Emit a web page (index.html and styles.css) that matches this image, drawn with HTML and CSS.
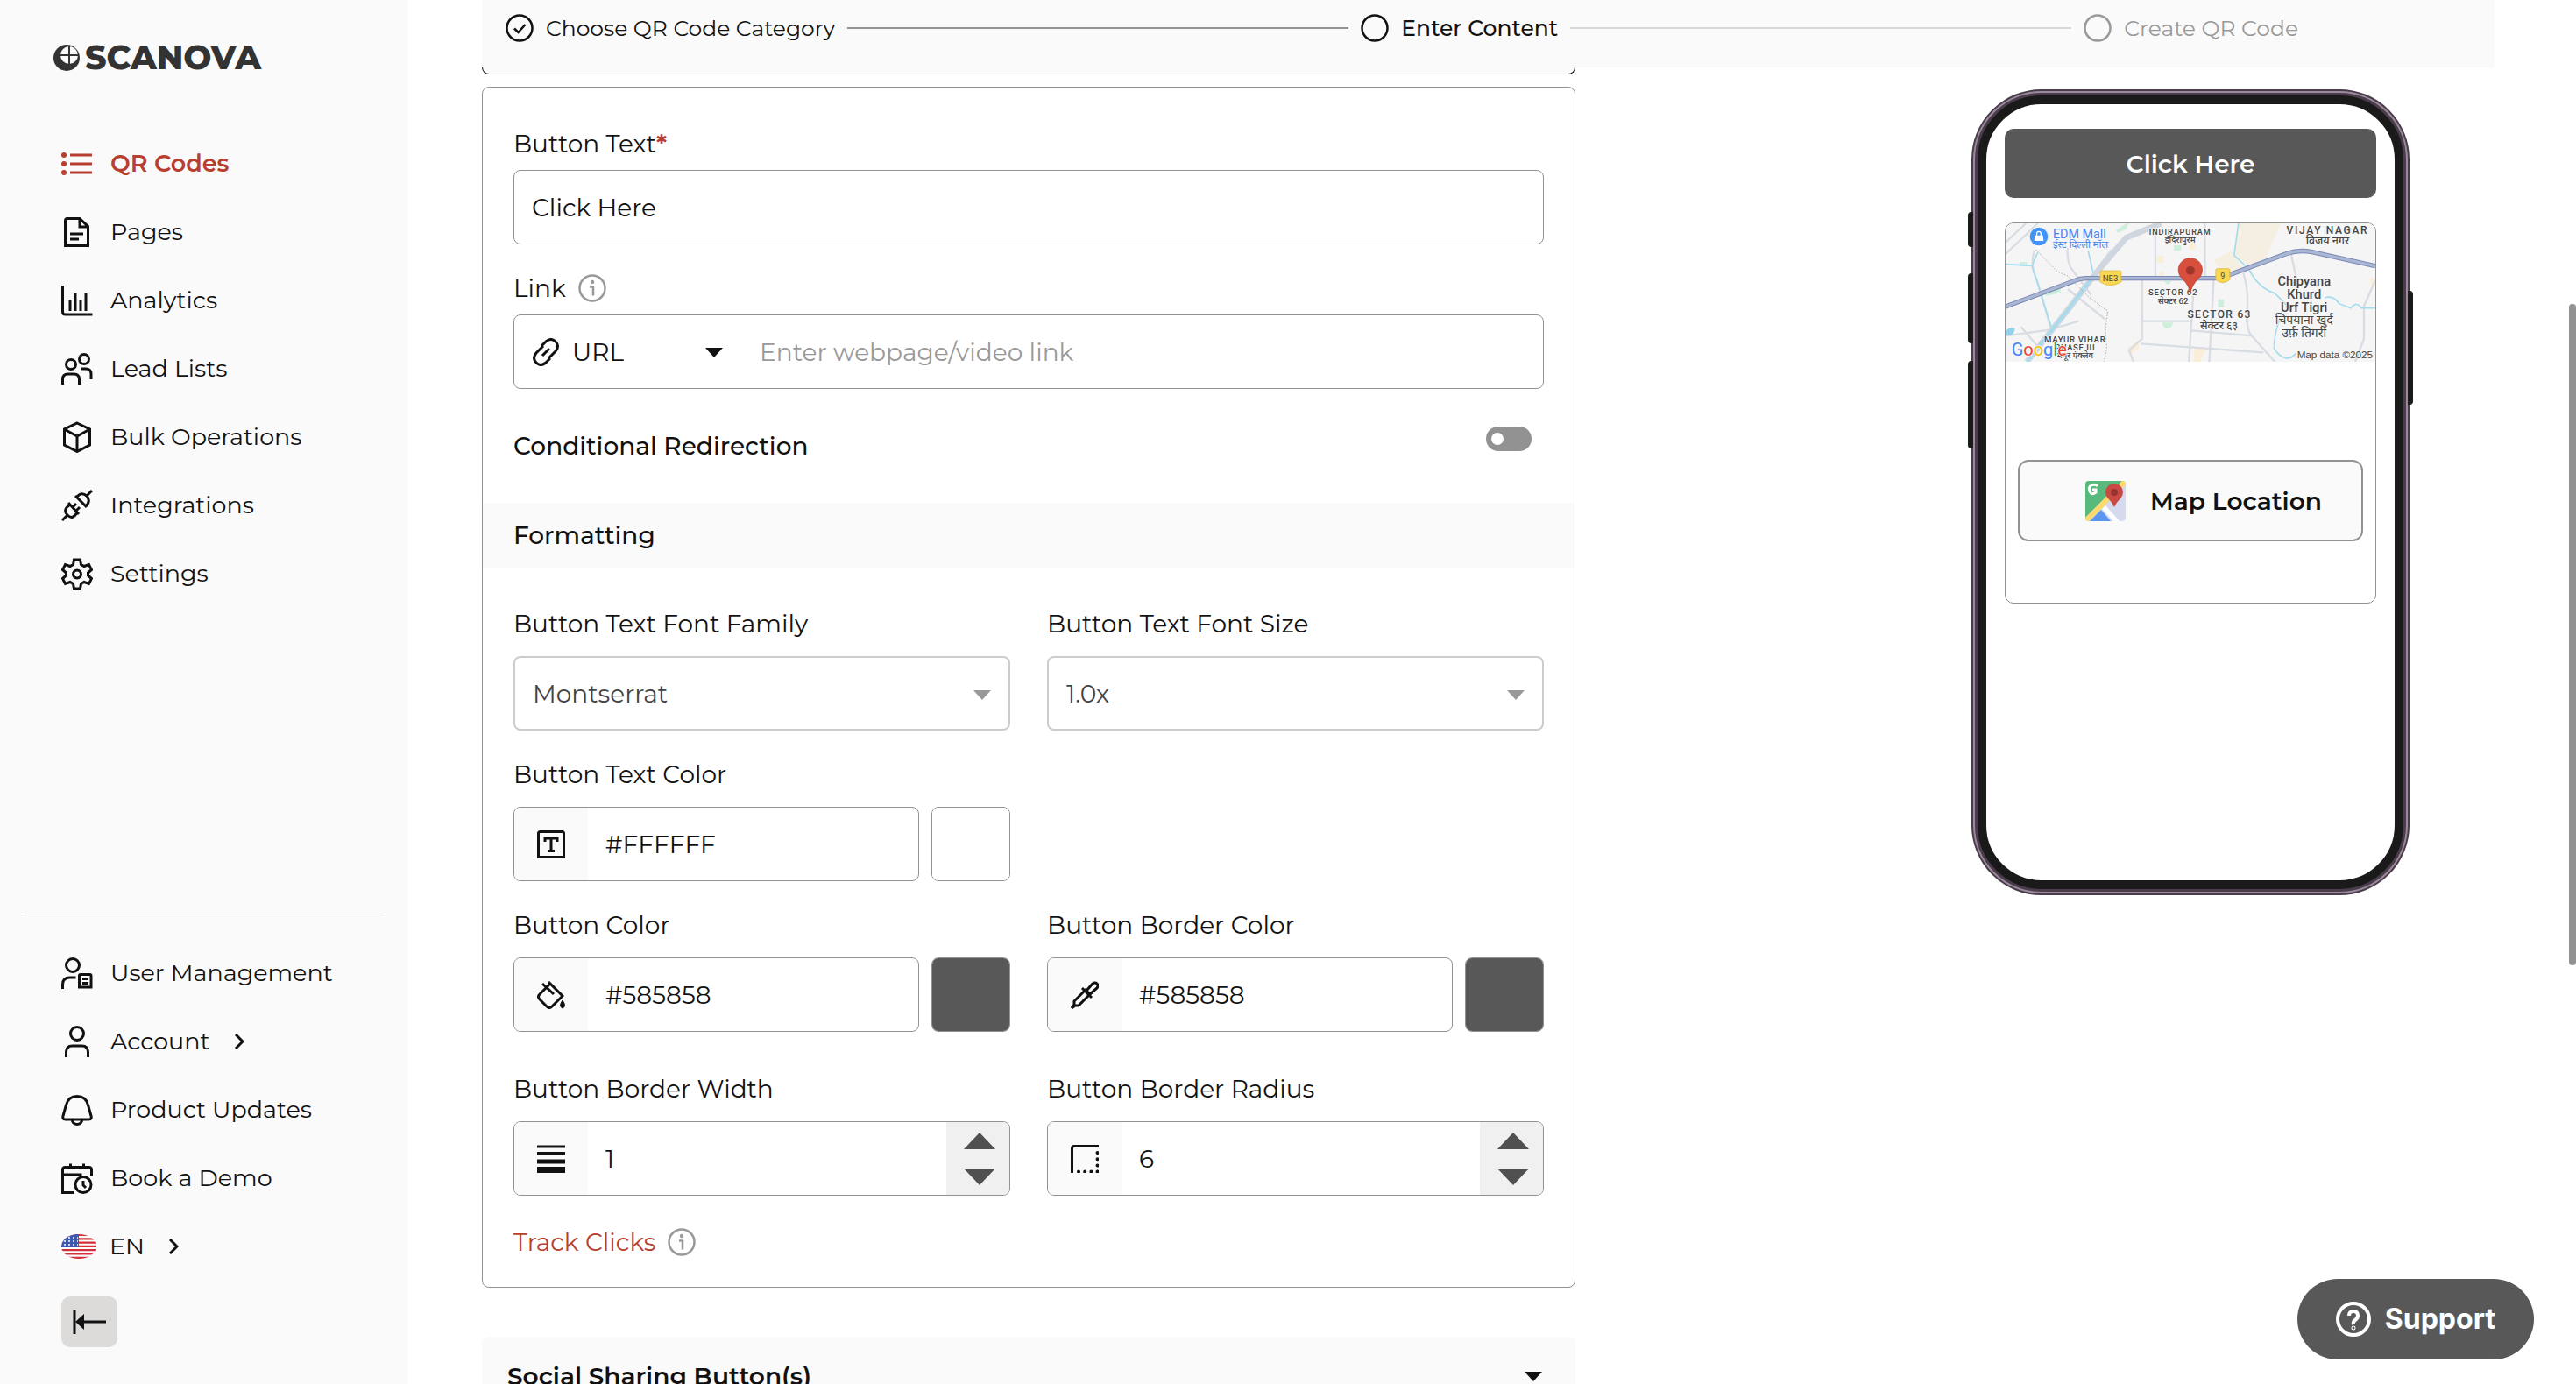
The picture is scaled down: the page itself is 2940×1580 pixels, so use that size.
FILE: index.html
```html
<!DOCTYPE html>
<html lang="en">
<head>
    <meta charset="UTF-8">
    <meta name="viewport" content="width=device-width, initial-scale=1.0">
    <title>Scanova - Enter Content</title>
    <link rel="stylesheet" href="styles.css">
</head>
<body>

<div class="app">
    <aside class="sidebar">
        <a href="#" class="logo">
            <svg width="30" height="32" viewBox="0 0 30 32">
                <circle cx="15" cy="16" r="15" fill="#333"/>
                <circle cx="18" cy="13" r="10" fill="#fafafa"/>
                <path d="M18 3v20M8 13h20" stroke="#333" stroke-width="2"/>
            </svg>
            <span>SCANOVA</span>
        </a>

        <nav class="nav">
            <a href="#" class="nav-item active">
                <svg class="icon" viewBox="0 0 36 36"><g fill="currentColor" stroke="none"><circle cx="3" cy="8" r="3"/><circle cx="3" cy="18" r="3"/><circle cx="3" cy="28" r="3"/></g><path d="M10 8h25M10 18h25M10 28h25"/></svg>
                <span>QR Codes</span>
            </a>
            <a href="#" class="nav-item">
                <svg class="icon" viewBox="0 0 36 36"><path d="M7 2.500h14l9.500 9v22h-26v-28.500q0-2.500 2.500-2.500zM21 2.500v9.500h9.500M10 20h15M10 26h10"/></svg>
                <span>Pages</span>
            </a>
            <a href="#" class="nav-item">
                <svg class="icon" viewBox="0 0 36 36"><path d="M1.500 1v30q0 3 3 3h31M10 17v13M16 10v20M22 17v13M28 10v20"/></svg>
                <span>Analytics</span>
            </a>
            <a href="#" class="nav-item">
                <svg class="icon" viewBox="0 0 36 36"><circle cx="11" cy="13" r="5.500"/><circle cx="26" cy="7" r="5.500"/><path d="M1.500 36v-6q0-6 6-6h7q6 0 6 6v6M23 18h5q6 0 6 6v6"/></svg>
                <span>Lead Lists</span>
            </a>
            <a href="#" class="nav-item">
                <svg class="icon" viewBox="0 0 36 36"><path d="M18 2l14.500 7v18l-14.500 7.500l-14.500-7.500v-18zM3.500 9l14.500 8l14.500-8M18 17v17"/></svg>
                <span>Bulk Operations</span>
            </a>
            <a href="#" class="nav-item">
                <svg class="icon" viewBox="0 0 36 36"><path d="M1 35l6-6M29 7l6-6M8 15l12 13M7 29q-6-6 3-12M7 29q6 6 11-3M13 20l4-4M17 24l4-4M16 7l13 13M18 8q5-6 11-1M29 7q5 6-1 12"/></svg>
                <span>Integrations</span>
            </a>
            <a href="#" class="nav-item">
                <svg class="icon" viewBox="0 0 36 36"><path d="M14.500 2h7l1 5.500l3.500 2l5.500-2l3 6l-4 3.500v3l4 3.500l-3 6l-5.500-2l-3.500 2l-1 5.500h-7l-1-5.500l-3.500-2l-5.500 2l-3-6l4-3.500v-3l-4-3.500l3-6l5.500 2l3.500-2z"/><circle cx="18" cy="18.500" r="4.500"/></svg>
                <span>Settings</span>
            </a>
        </nav>

        <nav class="nav nav-bottom">
            <a href="#" class="nav-item">
                <svg class="icon" viewBox="0 0 36 36"><circle cx="13" cy="9" r="7.500"/><path d="M1.500 36v-5q0-8 8-8h7M20.500 34v-13q0-1.500 1.500-1.500h10.500q1.500 0 1.500 1.500v13zM24 24.500h7M24 29.500h7"/></svg>
                <span>User Management</span>
            </a>
            <a href="#" class="nav-item">
                <svg class="icon" viewBox="0 0 36 36"><circle cx="18" cy="9" r="7.500"/><path d="M5.500 36v-6q0-7 7-7h11q7 0 7 7v6"/></svg>
                <span>Account</span>
                <svg class="chevron" viewBox="0 0 12 18"><path d="M2 1l8 8l-8 8"/></svg>
            </a>
            <a href="#" class="nav-item">
                <svg class="icon" viewBox="0 0 36 36"><path d="M18 2.500q-10 0-12.500 10l-3.500 12.500q-1 4 2.500 4h27q3.500 0 2.500-4l-3.500-12.500q-2.500-10-12.500-10zM12 29q1 5.500 6 5.500t6-5.500"/></svg>
                <span>Product Updates</span>
            </a>
            <a href="#" class="nav-item">
                <svg class="icon" viewBox="0 0 36 36"><path d="M15 34.500h-13.500v-26q0-3 3-3h27q3 0 3 3v7M1.500 14h22M10.500 1.500v4M25.500 1.500v4M25 21v5l3 3"/><circle cx="25" cy="25.500" r="9"/></svg>
                <span>Book a Demo</span>
            </a>
            <button type="button" class="nav-item language">
                <svg class="flag" viewBox="0 0 40 28">
                    <clipPath id="oval"><ellipse cx="20" cy="14" rx="20" ry="14"/></clipPath>
                    <g clip-path="url(#oval)">
                        <rect width="40" height="28" fill="#fff"/>
                        <path d="M0 1h40M0 5.300h40M0 9.600h40M0 13.900h40M0 18.200h40M0 22.500h40M0 26.800h40" stroke="#d32f3a" stroke-width="2.200"/>
                        <rect width="20" height="15" fill="#3c58b0"/>
                        <path d="M3 4h16M3 8h16M3 12h16" stroke="#fff" stroke-width="1.500" stroke-dasharray="2 3"/>
                    </g>
                </svg>
                <span>EN</span>
                <svg class="chevron" viewBox="0 0 12 18"><path d="M2 1l8 8l-8 8"/></svg>
            </button>
            <button type="button" class="collapse-button" aria-label="Collapse menu">
                <svg width="38" height="28" viewBox="0 0 38 28"><path d="M2 0v28M10 14h28" stroke="#111" stroke-width="3"/><path d="M3 14l10-9v18z" fill="#111"/></svg>
            </button>
        </nav>
    </aside>

    <main class="main">
        <ol class="stepper">
            <li class="step done">
                <svg class="step-icon" viewBox="0 0 32 32"><circle cx="16" cy="16" r="14.500"/><path d="M10 16.500l4.500 4.500l8-9"/></svg>
                <span>Choose QR Code Category</span>
            </li>
            <li class="step-line done-line"></li>
            <li class="step current">
                <svg class="step-icon" viewBox="0 0 32 32"><circle cx="16" cy="16" r="14.500"/></svg>
                <span>Enter Content</span>
            </li>
            <li class="step-line"></li>
            <li class="step upcoming">
                <svg class="step-icon" viewBox="0 0 32 32"><circle cx="16" cy="16" r="14.500"/></svg>
                <span>Create QR Code</span>
            </li>
        </ol>

        <div class="content">
            <form class="form-column">
                <div class="section-head"></div>
                <section class="card">
                    <div class="card-body">
                        <div class="field">
                            <label for="buttonText">Button Text<span class="required">*</span></label>
                            <div class="control"><input type="text" id="buttonText" value="Click Here"></div>
                        </div>
                        <div class="field">
                            <div class="label-row">
                                <label for="link">Link</label>
                                <svg class="info" viewBox="0 0 32 32"><circle cx="16" cy="16" r="14.500"/><circle cx="16" cy="9" r="1" /><path d="M13 14.500h4v10"/></svg>
                            </div>
                            <div class="control link-control">
                                <div class="link-type">
                                    <svg class="link-icon" viewBox="0 0 32 32"><path d="M11 9l5-5q6-5 11 0t0 11l-8 8M21 23l-5 5q-6 5-11 0t0-11l8-8M12 20l8-8"/></svg>
                                    <select id="linkType" aria-label="Link type"><option>URL</option></select>
                                    <svg class="caret" viewBox="0 0 20 11"><path d="M0 0h20l-10 11z"/></svg>
                                </div>
                                <input type="text" id="link" placeholder="Enter webpage/video link">
                            </div>
                        </div>
                        <div class="redirect-row">
                            <label for="redirect">Conditional Redirection</label>
                            <input type="checkbox" id="redirect" class="toggle">
                        </div>
                    </div>

                    <h2 class="band">Formatting</h2>

                    <div class="grid">
                        <div class="field">
                            <label for="fontFamily">Button Text Font Family</label>
                            <div class="control select-control">
                                <select id="fontFamily"><option>Montserrat</option></select>
                                <svg class="caret" viewBox="0 0 20 11"><path d="M0 0h20l-10 11z"/></svg>
                            </div>
                        </div>
                        <div class="field">
                            <label for="fontSize">Button Text Font Size</label>
                            <div class="control select-control">
                                <select id="fontSize"><option>1.0x</option></select>
                                <svg class="caret" viewBox="0 0 20 11"><path d="M0 0h20l-10 11z"/></svg>
                            </div>
                        </div>
                        <div class="field first-column">
                            <label for="textColor">Button Text Color</label>
                            <div class="color-row">
                                <div class="control">
                                    <span class="prefix"><svg viewBox="0 0 32 32"><path d="M1.500 30.500v-27q0-2 2-2h25q2 0 2 2v27zM9 13v-4h14v4M16 9v14M12 23.500h8"/></svg></span>
                                    <input type="text" id="textColor" value="#FFFFFF">
                                </div>
                                <input type="color" class="swatch" value="#ffffff" aria-label="Pick text color">
                            </div>
                        </div>
                        <div class="field first-column">
                            <label for="buttonColor">Button Color</label>
                            <div class="color-row">
                                <div class="control">
                                    <span class="prefix"><svg viewBox="0 0 32 32"><path d="M13 1l17 17M15 3l-12 12q-3 3 0 6l8 8q3 3 6 0l12-12M6 3l13 12"/><path d="M29 22q-5 7 0 9q5-2 0-9z" fill="#111" stroke-width="1"/></svg></span>
                                    <input type="text" id="buttonColor" value="#585858">
                                </div>
                                <input type="color" class="swatch" value="#585858" aria-label="Pick button color">
                            </div>
                        </div>
                        <div class="field">
                            <label for="borderColor">Button Border Color</label>
                            <div class="color-row">
                                <div class="control">
                                    <span class="prefix"><svg viewBox="0 0 32 32"><path d="M1 31l3-4v-4l13-13l5 5l-13 13h-4zM13 8l11 11M18 11l7-8q3-2 5 0t0 5l-8 7"/></svg></span>
                                    <input type="text" id="borderColor" value="#585858">
                                </div>
                                <input type="color" class="swatch" value="#585858" aria-label="Pick border color">
                            </div>
                        </div>
                    </div>

                    <div class="grid grid-last">
                        <div class="field">
                            <label for="borderWidth">Button Border Width</label>
                            <div class="control">
                                <span class="prefix"><svg viewBox="0 0 32 32"><path d="M0 2h32" stroke-width="3"/><path d="M0 10h32" stroke-width="4"/><path d="M0 19h32" stroke-width="5"/><path d="M0 28.500h32" stroke-width="7"/></svg></span>
                                <input type="number" id="borderWidth" value="1">
                                <div class="spinner">
                                    <button type="button" aria-label="Increase border width"><svg viewBox="0 0 36 19"><path d="M0 19h36l-18-19z"/></svg></button>
                                    <button type="button" aria-label="Decrease border width"><svg viewBox="0 0 36 19"><path d="M0 0h36l-18 19z"/></svg></button>
                                </div>
                            </div>
                        </div>
                        <div class="field">
                            <label for="borderRadius">Button Border Radius</label>
                            <div class="control">
                                <span class="prefix"><svg viewBox="0 0 32 32"><path d="M1.500 32v-28q0-2.500 2.500-2.500h28"/><path d="M9 30.500h22M30.500 9v22" stroke-dasharray="0 7.200" stroke-linecap="round" stroke-width="4"/></svg></span>
                                <input type="number" id="borderRadius" value="6">
                                <div class="spinner">
                                    <button type="button" aria-label="Increase border radius"><svg viewBox="0 0 36 19"><path d="M0 19h36l-18-19z"/></svg></button>
                                    <button type="button" aria-label="Decrease border radius"><svg viewBox="0 0 36 19"><path d="M0 0h36l-18 19z"/></svg></button>
                                </div>
                            </div>
                        </div>
                    </div>

                    <div class="label-row track">
                        <a href="#">Track Clicks</a>
                        <svg class="info" viewBox="0 0 32 32"><circle cx="16" cy="16" r="14.500"/><circle cx="16" cy="9" r="1" /><path d="M13 14.500h4v10"/></svg>
                    </div>
                </section>

                <button type="button" class="accordion">
                    <span>Social Sharing Button(s)</span>
                    <svg class="caret" viewBox="0 0 20 11"><path d="M0 0h20l-10 11z"/></svg>
                </button>
            </form>

            <div class="preview-column">
                <div class="phone">
                    <span class="key key-mute"></span>
                    <span class="key key-up"></span>
                    <span class="key key-down"></span>
                    <span class="key key-power"></span>
                    <div class="bezel">
                        <div class="screen">
                            <button type="button" class="preview-button">Click Here</button>
                            <div class="map-card">
                                <svg class="map" viewBox="27 45 1267 474" preserveAspectRatio="none">
                                    <rect x="27" y="45" width="1267" height="474" fill="#f5f5f5"/>
                                    <path d="M825 45h145l-50 115l-60 30l-50-35zM740 170l60-30l40 60l-60 30z" fill="#f5efe2"/>
                                    <path d="M540 155h28v25h-28zM610 95h22v18h-22zM655 110h22v25h-22zM555 210h14v14h-14zM1278 232h16v30h-16zM672 475h42l-20 44h-22zM448 470l35-25v30l-30 20z" fill="#fbeed8"/>
                                    <path d="M405 70l35-25h8l-8 20l-28 12zM603 120h25v18h-25zM755 305h20v28h-20zM563 385h38q-5 20-20 20t-18-20zM160 280l55-15v18l-50 10zM570 242h25q-10 22-25 0zM75 178h26v14h-26z" fill="#cdeeda"/>
                                    <g fill="none" stroke="#d8dde4" stroke-width="7">
                                        <path d="M27 110l70-65M27 150l110-105M125 140q-15 50 10 100l50 175M240 130q-5 50 20 80l60 80M27 430l150-20l100-30"/>
                                        <path d="M540 85v150M710 45v190M495 240v200l-45 40l15 39M495 380h170M740 240l-15 279M670 285l-15 234M490 457l420 30M665 412l205 18M840 210q20 60 15 130t15 90l80 89M1005 150l20 90M1255 330v110l-30 79M1294 240l-40 90M80 400l60 70M330 215l60-80M240 270l130 105"/>
                                    </g>
                                    <g fill="none" stroke="#a3dcee" stroke-width="5">
                                        <path d="M27 185l90 5l20-45M117 190l70 220l-25 25M310 140l20 85M825 45l-15 110l50 45q30 65 90 85l50 50"/>
                                        <path d="M1120 300q30-10 50 20l40 15q20-25 35 0h49M975 345q-30 80-28 130q40 55 75 15"/>
                                        <path d="M100 519l150-190l80-105l110-130l120-49" stroke="#cfd6df" stroke-width="20"/>
                                        <path d="M100 519l150-190l80-105" stroke-width="9"/>
                                    </g>
                                    <path d="M27 413q15-15 32-8q-2 22-20 24l-12-2z" fill="#8fd3ea"/>
                                    <path d="M130 135l75 75l35 15l75 75l62 45l-8 70l5 60l-10 44" fill="none" stroke="#8a8a8a" stroke-width="2" stroke-dasharray="5 5"/>
                                    <path d="M27 330l235-88q20-9 40-9h440q30 0 60-15l190-70q40-14 85-5l217 48" fill="none" stroke="#7c89b5" stroke-width="16"/>
                                    <path d="M27 330l235-88q20-9 40-9h440q30 0 60-15l190-70q40-14 85-5l217 48" fill="none" stroke="#a9b6d4" stroke-width="10"/>
                                    <path d="M355 207h64q4 0 4 4v35q-36 22-72 0v-35q0-4 4-4zM752 200h38q5 0 5 5v33q-24 20-48 0v-33q0-5 5-5z" fill="#f9d851" stroke="#d9b036" stroke-width="2"/>
                                    <path d="M141 137l-22-24a33 33 0 1 1 44 0z" fill="#fff" stroke="#d0d0d0"/>
                                    <circle cx="141" cy="90" r="31" fill="#4294f7"/>
                                    <path d="M127 86h28l2 19h-32z" fill="#fff"/>
                                    <path d="M134 87v-7a7 7 0 0 1 14 0v7" fill="none" stroke="#fff" stroke-width="4"/>
                                    <g class="map-text">
                                        <text x="386" y="242" font-size="29" text-anchor="middle">NE3</text>
                                        <text x="771" y="234" font-size="27" text-anchor="middle">9</text>
                                        <g class="halo">
                                            <text x="189" y="95" font-size="43" fill="#4285f4">EDM Mall</text>
                                            <text x="189" y="130" font-size="34" fill="#4285f4">ईस्ट दिल्ली मॉल</text>
                                        </g>
                                        <g class="halo" text-anchor="middle" font-weight="500">
                                            <text x="625" y="84" font-size="27" letter-spacing="3">INDIRAPURAM</text>
                                            <text x="625" y="112" font-size="29">इंदिरापुरम</text>
                                            <text x="1130" y="81" font-size="36" letter-spacing="5">VIJAY NAGAR</text>
                                            <text x="1130" y="117" font-size="37">विजय नगर</text>
                                            <text x="601" y="291" font-size="28" letter-spacing="3">SECTOR 62</text>
                                            <text x="601" y="320" font-size="29">सेक्टर 62</text>
                                            <text x="760" y="370" font-size="36" letter-spacing="4">SECTOR 63</text>
                                            <text x="758" y="408" font-size="37">सेक्टर ६३</text>
                                            <text x="265" y="452" font-size="29" letter-spacing="2">MAYUR VIHAR</text>
                                            <text x="265" y="481" font-size="28" letter-spacing="2">PHASE III</text>
                                            <text x="265" y="508" font-size="29">मयूर एंक्लेव</text>
                                            <text x="1050" y="258" font-size="44">Chipyana</text>
                                            <text x="1050" y="302" font-size="44">Khurd</text>
                                            <text x="1050" y="347" font-size="44">Urf Tigri</text>
                                            <text x="1050" y="390" font-size="42" font-weight="400">चिपयाना खुर्द</text>
                                            <text x="1050" y="434" font-size="42" font-weight="400">उर्फ़ तिगरी</text>
                                        </g>
                                        <text class="halo" x="47" y="499" font-size="60"><tspan fill="#4285f4">G</tspan><tspan fill="#ea4335">o</tspan><tspan fill="#fbbc05">o</tspan><tspan fill="#4285f4">g</tspan><tspan fill="#34a853">l</tspan><tspan fill="#ea4335">e</tspan></text>
                                        <text class="map-credit" x="1285" y="507" font-size="35" text-anchor="end">Map data ©2025</text>
                                    </g>
                                    <path d="M660 285q-5-28-25-48a41 41 0 1 1 50 0q-20 20-25 48z" fill="#d94f3d" stroke="#b23b2c" stroke-width="2"/>
                                    <circle cx="660" cy="206" r="15" fill="#a1372b"/>
                                </svg>
                                <button type="button" class="location-button">
                                    <svg width="46" height="46" viewBox="0 0 46 46">
                                        <rect width="46" height="46" rx="4" fill="#d5daef"/>
                                        <path d="M4 0h38l-42 42v-38q0-4 4-4z" fill="#57b97b"/>
                                        <path d="M18 33l11 13h-24z" fill="#5a95ee"/>
                                        <path d="M19 32l13 14h7l-16-18z" fill="#fff"/>
                                        <path d="M3 43l40-40" stroke="#fbd96c" stroke-width="6" stroke-linecap="round"/>
                                        <path d="M14 6q-3-3-7-1t-2 7t7 1v-3h-4" fill="none" stroke="#fff" stroke-width="3"/>
                                        <path d="M33 30q-2-5-7-10a10 10 0 1 1 14 0q-5 5-7 10z" fill="#c94a45"/>
                                        <circle cx="33" cy="13" r="4" fill="#98322f"/>
                                    </svg>
                                    <span>Map Location</span>
                                </button>
                            </div>
                        </div>
                    </div>
                </div>
            </div>
        </div>
    </main>
</div>

<div class="scroll-thumb"></div>

<button type="button" class="support">
    <svg width="40" height="40" viewBox="0 0 40 40"><circle cx="20" cy="20" r="18"/><path d="M15 16q0-5 5-5t5 5q0 3-3 5t-2 5"/><circle cx="20" cy="30" r=".5"/></svg>
    <span>Support</span>
</button>

</body>
</html>
```
FILE: styles.css
```css
* { box-sizing: border-box; }
body { margin: 0; font-family: Montserrat, Inter, "Noto Sans", sans-serif; font-size: 28px; line-height: 36px; color: #111; background-color: #fff; overflow: hidden; }
a { color: inherit; text-decoration: none; }
button, input, select { font: inherit; color: inherit; margin: 0; }
button { border: none; padding: 0; cursor: pointer; }
svg { flex-shrink: 0; display: block; }

.app { display: flex; height: 100vh; overflow: hidden; }

/* sidebar */
.sidebar { width: 466px; flex-shrink: 0; display: flex; flex-direction: column; padding: 46px 28px 42px; background-color: #fafafa; font-size: 27px; }
.logo { display: flex; align-items: center; gap: 6px; height: 40px; margin-left: 33px; font-size: 38px; font-weight: 800; color: #333; }
.nav { display: flex; flex-direction: column; gap: 36px; padding-left: 42px; margin-top: 80px; }
.nav-item { display: flex; align-items: center; height: 42px; gap: 20px; background: none; }
.nav-item.active { color: #b83f30; font-weight: 600; }
.nav-bottom { margin-top: auto; padding-top: 46px; border-top: 1px solid #ddd; }
.icon { width: 36px; height: 36px; fill: none; stroke: currentColor; stroke-width: 3; }
.chevron { width: 12px; height: 18px; margin-left: 8px; fill: none; stroke: #111; stroke-width: 3; }
.flag { width: 40px; height: 28px; }
.language { gap: 15px; }
.language .chevron { margin-left: 12px; }
.collapse-button { display: flex; align-items: center; justify-content: center; width: 64px; height: 58px; border-radius: 10px; background-color: #dcdbda; }

/* stepper */
.main { flex: 1; min-width: 0; padding: 0 93px 0 84px; }
.stepper { display: flex; align-items: center; gap: 14px; height: 77px; margin: 0; padding: 0 224px 14px 27px; list-style: none; font-size: 25px; background-color: #fafafa; }
.step { display: flex; align-items: center; gap: 14px; white-space: nowrap; }
.step-icon { width: 32px; height: 32px; fill: none; stroke: currentColor; stroke-width: 2.5; }
.step.current { font-weight: 500; }
.step.upcoming { color: #999; }
.step-line { flex: 1; height: 2px; background-color: #d8d8d8; }
.done-line { background-color: #929292; }

/* form */
.content { display: grid; grid-template-columns: 1.19fr 1fr; }
.section-head { height: 8px; border: 1px solid #111; border-top: none; border-radius: 0 0 8px 8px; background-color: #fafafa; }
.card { margin-top: 14px; border: 1px solid #929292; border-radius: 8px; }
.card-body { display: flex; flex-direction: column; gap: 32px; padding: 46px 35px 47px; }
.field { display: flex; flex-direction: column; gap: 19px; min-width: 0; }
.card-body .field { gap: 12px; }
.required { color: #b83f30; font-weight: 700; }
.label-row { display: flex; align-items: center; gap: 14px; }
.info { width: 32px; height: 32px; fill: none; stroke: #999; stroke-width: 2.5; }
.control { display: flex; flex: 1; position: relative; height: 85px; min-height: 85px; border: 1px solid #929292; border-radius: 8px; overflow: hidden; background-color: #fff; }
.control input { flex: 1; width: 0; min-width: 0; border: none; outline: none; padding: 0 20px; background: none; }
.control input::placeholder { color: #999; opacity: 1; }
.control select { appearance: none; flex: 1; border: none; outline: none; background: none; padding: 0 20px; }
.control .caret { position: absolute; right: 20px; top: 37px; pointer-events: none; }
.caret { width: 20px; height: 11px; fill: #111; }
.link-type { display: flex; align-items: center; position: relative; width: 260px; padding-left: 20px; }
.link-type select { align-self: stretch; padding: 0 14px; }
.link-control .caret { right: 22px; }
.link-icon { width: 32px; height: 32px; fill: none; stroke: #111; stroke-width: 3; }
.redirect-row { display: flex; align-items: flex-start; justify-content: space-between; padding: 11px 14px 0 0; font-weight: 500; }
.redirect-row label { padding-top: 4px; }
.toggle { appearance: none; display: flex; align-items: center; width: 52px; height: 28px; padding: 0 6px; border-radius: 14px; background-color: #929292; }
.toggle::before { content: ""; width: 14px; height: 14px; border-radius: 50%; background-color: #fff; }
.band { margin: 0; padding: 19px 35px; font-size: 28px; line-height: 36px; font-weight: 500; background-color: #fafafa; }
.grid { display: grid; grid-template-columns: 1fr 1fr; gap: 32px 42px; padding: 46px 35px 0; }
.grid-last { padding-top: 47px; }
.first-column { grid-column: 1 / 2; }
.select-control { border: 2px solid #ccc; color: #444; }
.select-control .caret { fill: #999; }
.color-row { display: flex; gap: 14px; }
.prefix { display: flex; align-items: center; justify-content: center; width: 84px; background-color: #fafafa; }
.prefix svg { width: 32px; height: 32px; fill: none; stroke: #111; stroke-width: 3; }
.swatch { appearance: none; width: 90px; height: 85px; padding: 0; border: 1px solid #929292; border-radius: 8px; overflow: hidden; background: none; }
.swatch::-webkit-color-swatch-wrapper { padding: 0; }
.swatch::-webkit-color-swatch { border: none; }
input[type="number"] { appearance: textfield; }
input[type="number"]::-webkit-inner-spin-button { display: none; }
.spinner { display: flex; flex-direction: column; justify-content: center; gap: 22px; width: 72px; padding-left: 3px; background-color: #f0f0f0; }
.spinner button { display: flex; justify-content: center; background: none; }
.spinner svg { width: 36px; height: 19px; fill: #505050; }
.track { padding: 35px 35px 33px; color: #b83f30; }
.accordion { display: flex; align-items: center; justify-content: space-between; width: 100%; height: 90px; margin-top: 56px; padding: 0 38px 0 29px; border-radius: 8px 8px 0 0; background-color: #fafafa; font-weight: 600; }

/* phone preview */
.preview-column { display: flex; justify-content: flex-end; align-items: flex-start; padding: 25px 97px 0 0; }
.phone { position: relative; width: 500px; height: 920px; border: 2px solid #4a3c4a; border-radius: 80px; background-color: #4a3c4a; }
.bezel { position: relative; height: 100%; padding: 3px; border: 2px solid #9b8a9b; border-radius: 78px; background-color: #4a3c4a; }
.screen { height: 100%; padding: 28px 21px; border: 10px solid #1a1a1a; border-radius: 73px; background-color: #fff; }
.key { position: absolute; width: 8px; border-radius: 4px; background-color: #1a1a1a; }
.key-mute { left: -6px; top: 138px; height: 40px; }
.key-up { left: -6px; top: 208px; height: 80px; }
.key-down { left: -6px; top: 308px; height: 100px; }
.key-power { right: -6px; top: 228px; height: 130px; }
.preview-button { display: block; width: 100%; height: 79px; border-radius: 10px; background-color: #585858; color: #fff; font-weight: 600; }
.map-card { height: 435px; margin-top: 28px; border: 1px solid #929292; border-radius: 10px; overflow: hidden; }
.map { width: 100%; height: 158px; }
.map-text { font-family: Roboto, "Noto Sans", sans-serif; fill: #444; }
.halo { stroke: #f5f5f5; stroke-width: 5px; stroke-linejoin: round; paint-order: stroke; }
.map-credit { font-family: "Liberation Sans", Arial, sans-serif; }
.location-button { display: flex; align-items: center; justify-content: center; gap: 28px; width: calc(100% - 28px); height: 93px; margin: 112px 14px 0; padding-left: 30px; border: 2px solid #929292; border-radius: 12px; background-color: #fafafa; font-weight: 600; }

/* floating parts */
.scroll-thumb { position: fixed; right: 0; top: 347px; width: 8px; height: 755px; border-radius: 4px; background-color: #929292; }
.support { position: fixed; right: 48px; bottom: 28px; display: flex; align-items: center; gap: 16px; height: 92px; padding: 0 44px; border-radius: 46px; background-color: #585858; color: #fff; font-family: Inter, sans-serif; font-size: 32px; font-weight: 700; }
.support svg { fill: none; stroke: #fff; stroke-width: 4; }
```
